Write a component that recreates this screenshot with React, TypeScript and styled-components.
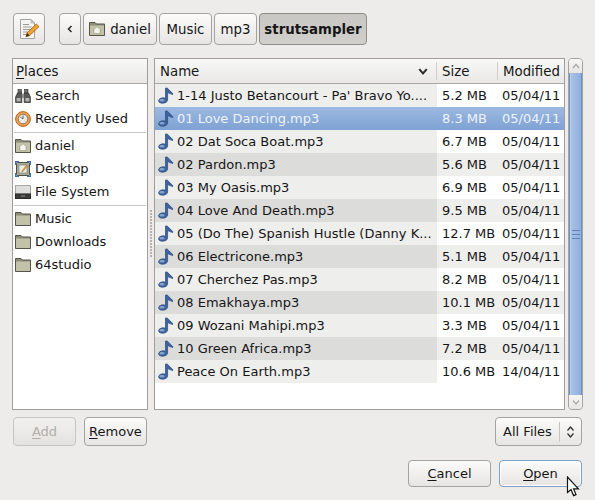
import React from 'react';
import styled, { createGlobalStyle } from 'styled-components';

const GlobalStyle = createGlobalStyle`
  html, body {
    margin: 0;
    padding: 0;
    background: #edecea;
  }
`;

const Dialog = styled.div`
  position: relative;
  box-sizing: border-box;
  width: 595px;
  height: 500px;
  padding: 13px 12px 13px 12px;
  background: #edecea;
  color: #161616;
  font-family: 'DejaVu Sans', sans-serif;
  font-size: 13px;
  overflow: hidden;
  display: flex;
  flex-direction: column;
`;

const Toolbar = styled.div`
  display: flex;
  height: 32px;
  padding-left: 1px;
  font-size: 13.33px;
`;

const Crumbs = styled.div`
  display: flex;
  gap: 2px;
  margin-left: 14px;
`;

const GtkButton = styled.button<{ $width: number; $active?: boolean; $focus?: boolean }>`
  box-sizing: border-box;
  width: ${p => p.$width}px;
  height: 100%;
  padding: 0;
  display: flex;
  align-items: center;
  justify-content: center;
  gap: 5px;
  font: inherit;
  font-weight: ${p => (p.$active ? 700 : 400)};
  color: #161616;
  border: 1px solid ${p => (p.$focus ? '#7ea0c8' : p.$active ? '#8f8d88' : '#a5a39f')};
  border-radius: 4px;
  background: ${p =>
    p.$active
      ? 'linear-gradient(#c9c7c3, #d1cfcb)'
      : 'linear-gradient(#fbfbfa 0%, #f1f0ef 50%, #e6e5e3 100%)'};
  box-shadow: ${p => (p.$focus ? 'inset 0 0 0 1px #fff' : 'none')};
`;

const DisabledButton = styled(GtkButton)`
  color: #b0afac;
  border-color: #c6c5c2;
  background: linear-gradient(#f1f0ee 0%, #ebeae8 50%, #e3e2e0 100%);
`;

const Panes = styled.div`
  display: flex;
  height: 352px;
  margin-top: 13px;
`;

const PlacesPanel = styled.div`
  box-sizing: border-box;
  width: 136px;
  border: 1px solid #a09e9a;
  background: #fff;
`;

const ColumnHead = styled.div`
  box-sizing: border-box;
  height: 25px;
  display: flex;
  align-items: center;
  font-size: 13.33px;
  background: linear-gradient(#f8f8f7, #e9e8e6);
  border-bottom: 1px solid #a9a7a3;
`;

const PlacesTitle = styled(ColumnHead)`
  padding-left: 3px;
`;

const PlaceRow = styled.div`
  height: 23px;
  display: flex;
  align-items: center;
  gap: 4px;
  padding-left: 2px;
`;

const Separator = styled.div`
  height: 1px;
  margin: 2px 1px 1px 1px;
  background: #c9c8c5;
`;

const PaneHandle = styled.div`
  width: 6px;
  display: flex;
  flex-direction: column;
  justify-content: center;
  align-items: center;
`;

const HandleDots = styled.div`
  width: 3px;
  height: 48px;
  background-image: radial-gradient(circle at 1px 1px, #b4b3af 1px, transparent 1px);
  background-size: 3px 3px;
`;

const FilesPanel = styled.div`
  box-sizing: border-box;
  width: 411px;
  border: 1px solid #a09e9a;
  background: #fff;
`;

const HeadCell = styled.div<{ $width: number; $divider?: boolean; $spread?: boolean }>`
  box-sizing: border-box;
  width: ${p => p.$width}px;
  height: 18px;
  display: flex;
  align-items: center;
  justify-content: space-between;
  padding: 0 ${p => (p.$spread ? 8 : 5)}px 0 5px;
  border-left: ${p => (p.$divider ? '1px solid #cfcecb' : 'none')};
`;

const FileRow = styled.div<{ $selected?: boolean }>`
  height: 23px;
  display: grid;
  grid-template-columns: 282px 60px 67px;
  color: ${p => (p.$selected ? '#eef3fa' : '#161616')};
  background: ${p => (p.$selected ? 'linear-gradient(#9cb9e0, #7ea2d4)' : 'transparent')};
`;

const FileCell = styled.div<{ $even: boolean; $sorted?: boolean; $selected?: boolean }>`
  display: flex;
  align-items: center;
  gap: 3px;
  padding-left: ${p => (p.$sorted ? 3 : 5)}px;
  white-space: nowrap;
  overflow: hidden;
  background: ${p => {
    if (p.$selected) return 'transparent';
    if (p.$sorted) return p.$even ? '#dcdcdb' : '#eeeeed';
    return p.$even ? '#eeeeed' : '#ffffff';
  }};
`;

const Scrollbar = styled.div`
  box-sizing: border-box;
  width: 15px;
  margin-left: 3px;
  display: flex;
  flex-direction: column;
  border: 1px solid #a5a39f;
  border-radius: 4px;
  overflow: hidden;
  background: #dcdbd8;
`;

const Stepper = styled.div`
  height: 14px;
  flex: none;
  display: flex;
  align-items: center;
  justify-content: center;
  background: linear-gradient(#f6f6f5, #e6e5e3);
`;

const Thumb = styled.div`
  flex: 1;
  display: flex;
  align-items: center;
  justify-content: center;
  border-left: 1px solid #6f92c4;
  border-right: 1px solid #6f92c4;
  box-shadow: inset 1px 0 0 #b9cfec;
  background: linear-gradient(90deg, #a9c3e6, #8fb0dd);
`;

const Grip = styled.div`
  width: 8px;
  height: 9px;
  background: repeating-linear-gradient(#5f83b8 0 1px, transparent 1px 4px);
`;

const FilterRow = styled.div`
  display: flex;
  justify-content: space-between;
  height: 29px;
  margin-top: 7px;
  padding: 0 1px;
`;

const LeftButtons = styled.div`
  display: flex;
  gap: 8px;
`;

const ComboButton = styled(GtkButton)`
  justify-content: flex-start;
  gap: 0;
`;

const ComboLabel = styled.span`
  flex: 1;
  text-align: center;
`;

const ComboArrow = styled.span`
  width: 21px;
  height: 20px;
  display: flex;
  align-items: center;
  justify-content: center;
  border-left: 1px solid #c4c3c0;
`;

const ActionRow = styled.div`
  display: flex;
  justify-content: flex-end;
  gap: 8px;
  height: 27px;
  margin-top: 14px;
  padding-right: 1px;
`;

const Mnemonic = styled.span`
  text-decoration: underline;
  text-underline-offset: 2px;
  text-decoration-thickness: 1px;
`;

const Pointer = styled.svg`
  position: absolute;
  left: 566px;
  top: 476px;
`;

const NoteIcon = () => (
  <svg width="16" height="17" viewBox="0 0 16 17" style={{ flex: 'none' }}>
    <path
      d="M7.5 1 H9.2 L15 6.8 L14.6 7.6 L9.6 5.6 V13 C9.6 15 7.2 16.2 4.6 16.2 C2 16.2 0.6 15.2 0.6 13.8 C0.6 12 3 10.8 5.2 10.8 C6.2 10.8 7 11 7.5 11.3 Z"
      fill="#3d639f"
      stroke="#2a4878"
      strokeWidth="0.7"
      strokeLinejoin="round"
    />
    <ellipse cx="4" cy="13.2" rx="2.6" ry="1.2" fill="#86a3cf" />
  </svg>
);

const FolderIcon = ({ home }: { home?: boolean }) => (
  <svg width="16" height="16" viewBox="0 0 16 16" style={{ flex: 'none' }}>
    <path d="M0.5 14.5 V1.5 H6 L7.5 3 H15.5 V14.5 Z" fill="#8d8c78" stroke="#55544a" />
    <rect x="1" y="4.5" width="14" height="9.5" fill="#c2c2a8" />
    {home && <path d="M8 5.8 L12 9.2 H11 V12.6 H5 V9.2 H4 Z" fill="#f4f4ee" stroke="#8c8c78" strokeWidth="0.5" />}
  </svg>
);

const SearchIcon = () => (
  <svg width="16" height="16" viewBox="0 0 16 16" style={{ flex: 'none' }}>
    <rect x="3" y="1.5" width="3.5" height="4" fill="#6d6d6a" stroke="#2f2f2e" strokeWidth="0.6" />
    <rect x="9.5" y="1.5" width="3.5" height="4" fill="#6d6d6a" stroke="#2f2f2e" strokeWidth="0.6" />
    <path d="M2.5 5 H6.8 V14.5 H0.6 V9 Z" fill="#5a5a58" stroke="#262625" strokeWidth="0.7" />
    <path d="M13.5 5 H9.2 V14.5 H15.4 V9 Z" fill="#5a5a58" stroke="#262625" strokeWidth="0.7" />
    <rect x="6.8" y="6" width="2.4" height="4" fill="#8b8b88" />
    <rect x="1.6" y="10" width="4" height="3.4" fill="#b5b5b2" />
    <rect x="10.4" y="10" width="4" height="3.4" fill="#b5b5b2" />
  </svg>
);

const RecentIcon = () => (
  <svg width="16" height="16" viewBox="0 0 16 16" style={{ flex: 'none' }}>
    <circle cx="8" cy="8" r="7.4" fill="#f0a04a" stroke="#c0621a" />
    <circle cx="8" cy="8" r="4.8" fill="#e9e7dc" stroke="#6d6a5f" strokeWidth="0.8" />
    <path d="M8.4 4.2 L6.2 8 L8.6 7.6 L6.8 11.6" fill="none" stroke="#fff" strokeWidth="1.3" />
    <path d="M8 4.4 V8 L5.4 6.2" fill="none" stroke="#333" strokeWidth="0.8" />
  </svg>
);

const DesktopIcon = () => (
  <svg width="16" height="16" viewBox="0 0 16 16" style={{ flex: 'none' }}>
    <rect x="1.5" y="1.5" width="13" height="13" rx="1" fill="#a8ab98" stroke="#4a4d42" />
    <rect x="4" y="4" width="8" height="8" fill="#ecebe2" stroke="#73766a" strokeWidth="0.6" />
    <path d="M11.4 4.2 L7.4 9.4 L6.6 11 L8.2 10.2 L12 5.2 Z" fill="#ef9a22" stroke="#9a5a0c" strokeWidth="0.4" />
    <path d="M0.5 4 V0.5 H4 M12 0.5 H15.5 V4 M15.5 12 V15.5 H12 M4 15.5 H0.5 V12" fill="none" stroke="#3f6fb0" strokeWidth="1.6" />
  </svg>
);

const DriveIcon = () => (
  <svg width="16" height="16" viewBox="0 0 16 16" style={{ flex: 'none' }}>
    <rect x="0.5" y="1.5" width="15" height="8.5" fill="#dededc" stroke="#a6a6a3" />
    <rect x="0.5" y="10" width="15" height="4.5" fill="#3c3c3b" stroke="#2a2a29" />
    <rect x="6" y="11.5" width="4" height="1" fill="#8d8d8a" />
  </svg>
);

const EditIcon = () => (
  <svg width="22" height="22" viewBox="0 0 22 22">
    <path d="M2.5 1.5 H13 L16.5 5 V20.5 H2.5 Z" fill="#f4f4f2" stroke="#a3a39f" />
    <path d="M13 1.5 V5 H16.5 Z" fill="#d0d0cc" stroke="#a3a39f" strokeWidth="0.6" />
    <path d="M5 6.5 H11 M5 9 H13.5 M5 11.5 H13.5 M5 14 H10 M5 16.5 H8" stroke="#9a9a96" strokeWidth="1" />
    <path d="M18.2 6 L21 8.6 L11.6 17.6 L8 18.8 L9 15 Z" fill="#f2a32e" stroke="#a65c10" strokeWidth="0.8" />
    <path d="M9 15 L8 18.8 L11.6 17.6 Z" fill="#3a2a18" />
  </svg>
);

const Chevron = ({ dir, color = '#2e2e2e', size = 8, weight = 1.6 }: { dir: 'up' | 'down' | 'left'; color?: string; size?: number; weight?: number }) => {
  const paths = { up: 'M1 6 L4 2.5 L7 6', down: 'M1 2.5 L4 6 L7 2.5', left: 'M5.5 1 L2.5 4 L5.5 7' };
  return (
    <svg width={size} height={size} viewBox="0 0 8 8" style={{ display: 'block', flex: 'none' }}>
      <path d={paths[dir]} fill="none" stroke={color} strokeWidth={weight} />
    </svg>
  );
};

const places = [
  [
    { name: 'Search', icon: <SearchIcon /> },
    { name: 'Recently Used', icon: <RecentIcon /> },
  ],
  [
    { name: 'daniel', icon: <FolderIcon home /> },
    { name: 'Desktop', icon: <DesktopIcon /> },
    { name: 'File System', icon: <DriveIcon /> },
  ],
  [
    { name: 'Music', icon: <FolderIcon /> },
    { name: 'Downloads', icon: <FolderIcon /> },
    { name: '64studio', icon: <FolderIcon /> },
  ],
];

const files = [
  ['1-14 Justo Betancourt - Pa\' Bravo Yo....', '5.2 MB', '05/04/11'],
  ['01 Love Dancing.mp3', '8.3 MB', '05/04/11'],
  ['02 Dat Soca Boat.mp3', '6.7 MB', '05/04/11'],
  ['02 Pardon.mp3', '5.6 MB', '05/04/11'],
  ['03 My Oasis.mp3', '6.9 MB', '05/04/11'],
  ['04 Love And Death.mp3', '9.5 MB', '05/04/11'],
  ['05 (Do The) Spanish Hustle (Danny K...', '12.7 MB', '05/04/11'],
  ['06 Electricone.mp3', '5.1 MB', '05/04/11'],
  ['07 Cherchez Pas.mp3', '8.2 MB', '05/04/11'],
  ['08 Emakhaya.mp3', '10.1 MB', '05/04/11'],
  ['09 Wozani Mahipi.mp3', '3.3 MB', '05/04/11'],
  ['10 Green Africa.mp3', '7.2 MB', '05/04/11'],
  ['Peace On Earth.mp3', '10.6 MB', '14/04/11'],
];

export default function App() {
  return (
    <Dialog>
      <GlobalStyle />
      <Toolbar>
        <GtkButton $width={32}>
          <EditIcon />
        </GtkButton>
        <Crumbs>
          <GtkButton $width={22}>
            <Chevron dir="left" />
          </GtkButton>
          <GtkButton $width={74}>
            <FolderIcon home />
            daniel
          </GtkButton>
          <GtkButton $width={53}>Music</GtkButton>
          <GtkButton $width={43}>mp3</GtkButton>
          <GtkButton $width={108} $active>
            strutsampler
          </GtkButton>
        </Crumbs>
      </Toolbar>

      <Panes>
        <PlacesPanel>
          <PlacesTitle>
            <span>
              <Mnemonic>P</Mnemonic>laces
            </span>
          </PlacesTitle>
          {places.map((group, i) => (
            <React.Fragment key={i}>
              {i > 0 && <Separator />}
              {group.map(place => (
                <PlaceRow key={place.name}>
                  {place.icon}
                  {place.name}
                </PlaceRow>
              ))}
            </React.Fragment>
          ))}
        </PlacesPanel>
        <PaneHandle>
          <HandleDots />
        </PaneHandle>
        <FilesPanel>
          <ColumnHead>
            <HeadCell $width={281} $spread>
              Name
              <Chevron dir="down" size={10} />
            </HeadCell>
            <HeadCell $width={61} $divider>
              Size
            </HeadCell>
            <HeadCell $width={67} $divider>
              Modified
            </HeadCell>
          </ColumnHead>
          {files.map((file, i) => {
            const selected = i === 1;
            const even = i % 2 === 1;
            return (
              <FileRow key={file[0]} $selected={selected}>
                <FileCell $even={even} $sorted $selected={selected}>
                  <NoteIcon />
                  {file[0]}
                </FileCell>
                <FileCell $even={even} $selected={selected}>
                  {file[1]}
                </FileCell>
                <FileCell $even={even} $selected={selected}>
                  {file[2]}
                </FileCell>
              </FileRow>
            );
          })}
        </FilesPanel>
        <Scrollbar>
          <Stepper>
            <Chevron dir="up" color="#a9a8a5" weight={1.2} />
          </Stepper>
          <Thumb>
            <Grip />
          </Thumb>
          <Stepper>
            <Chevron dir="down" color="#a9a8a5" weight={1.2} />
          </Stepper>
        </Scrollbar>
      </Panes>

      <FilterRow>
        <LeftButtons>
          <DisabledButton $width={63} disabled>
            <span>
              <Mnemonic>A</Mnemonic>dd
            </span>
          </DisabledButton>
          <GtkButton $width={63}>
            <span>
              <Mnemonic>R</Mnemonic>emove
            </span>
          </GtkButton>
        </LeftButtons>
        <ComboButton $width={87}>
          <ComboLabel>All Files</ComboLabel>
          <ComboArrow>
            <svg width="9" height="14" viewBox="0 0 9 14">
              <path d="M1.5 5.5 L4.5 2 L7.5 5.5 M1.5 8.5 L4.5 12 L7.5 8.5" fill="none" stroke="#2e2e2e" strokeWidth="1.2" />
            </svg>
          </ComboArrow>
        </ComboButton>
      </FilterRow>

      <ActionRow>
        <GtkButton $width={83}>
          <span>
            <Mnemonic>C</Mnemonic>ancel
          </span>
        </GtkButton>
        <GtkButton $width={83} $focus>
          <span>
            <Mnemonic>O</Mnemonic>pen
          </span>
        </GtkButton>
      </ActionRow>

      <Pointer width="16" height="22" viewBox="0 0 16 22">
        <path
          d="M1.5 1 V16.5 L5 13.5 L7.6 19.6 L10 18.6 L7.6 12.8 H12.4 Z"
          fill="#ffffff"
          stroke="#141414"
          strokeWidth="1.2"
          strokeLinejoin="miter"
        />
      </Pointer>
    </Dialog>
  );
}
